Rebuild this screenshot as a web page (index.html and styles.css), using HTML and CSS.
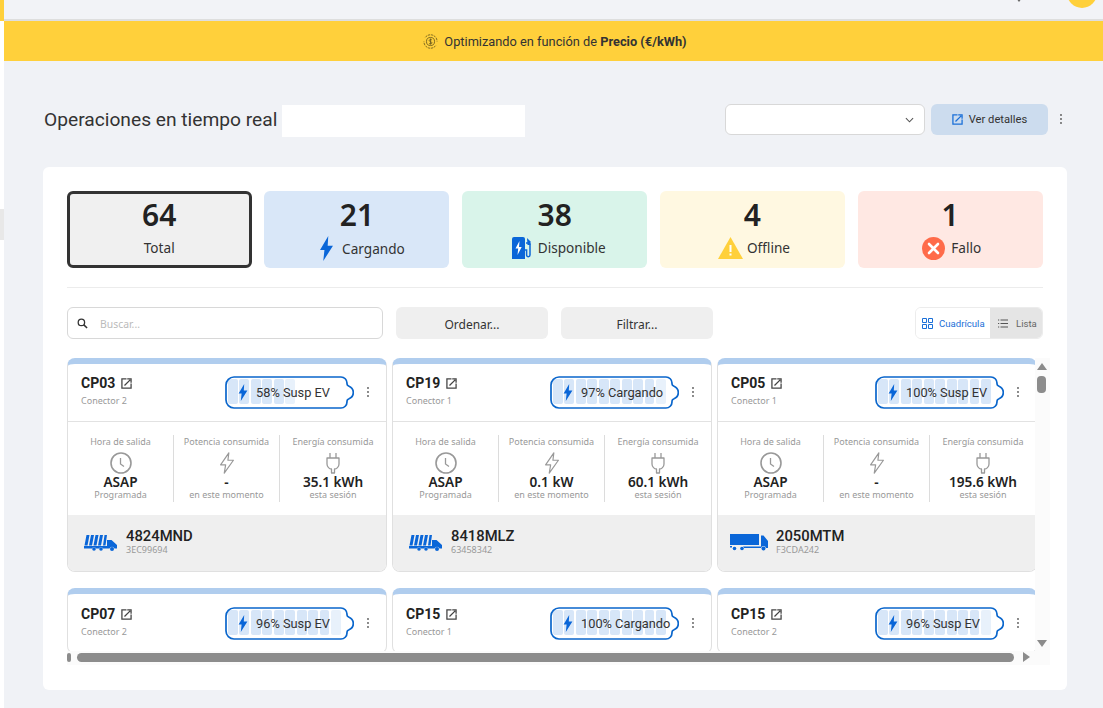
FILE: index.html
```html
<!DOCTYPE html>
<html lang="es">
<head>
<meta charset="utf-8">
<title>Operaciones en tiempo real</title>
<link rel="stylesheet" href="styles.css">
</head>
<body>
<svg class="defs" width="0" height="0" aria-hidden="true">
  <symbol id="ext" viewBox="0 0 12 12"><path d="M6 1H1v10h10V6" fill="none" stroke="currentColor" stroke-width="1.4"/><path d="M3.8 8.2 10 2M6.8 1h4.2v4.2" fill="none" stroke="currentColor" stroke-width="1.4"/></symbol>
  <symbol id="bolt" viewBox="0 0 10 17"><path d="M6.2 0 .6 9.6h3L2.8 17l6.6-10.4H5.8z" fill="currentColor"/></symbol>
  <symbol id="boltline" viewBox="0 0 18 24"><path d="M11 1 2 14h5.5L6 23l10-14h-6z" fill="none" stroke="currentColor" stroke-width="1.3" stroke-linejoin="round"/></symbol>
  <symbol id="clock" viewBox="0 0 22 22"><circle cx="11" cy="11" r="10" fill="none" stroke="currentColor" stroke-width="1.6"/><path d="M10.5 6v6l3.5 2.500" fill="none" stroke="currentColor" stroke-width="1.3"/></symbol>
  <symbol id="plug" viewBox="0 0 16 22"><path d="M5 1v5M11 1v5M2 6h12v6c0 3-2.500 5-4.500 5v4h-3v-4C4.500 17 2 15 2 12z" fill="none" stroke="currentColor" stroke-width="1.300" stroke-linejoin="round"/></symbol>
  <symbol id="batt" viewBox="0 0 129 33"><path d="M9 1H116a6 6 0 0 1 6 6v1q0 1.500 2 2.300c2.800 1.200 4.300 3.200 4.300 6.200s-1.500 5-4.300 6.200q-2 .8-2 2.300v1a6 6 0 0 1-6 6H9a8 8 0 0 1-8-8V9a8 8 0 0 1 8-8z" fill="none" stroke="#0a66cc" stroke-width="1.700"/></symbol>
  <symbol id="dots" viewBox="0 0 4 12"><circle cx="2" cy="2" r=".9" fill="currentColor"/><circle cx="2" cy="6" r=".9" fill="currentColor"/><circle cx="2" cy="10" r=".9" fill="currentColor"/></symbol>
  <symbol id="truck-a" viewBox="1 0 38 20"><g fill="#0a66d8"><path d="M7.500 2h3l-2 10.500h-3zM12 2h3l-2 10.500h-3zM16.500 2h3l-2 10.500h-3zM21 2h3l-2 10.500h-3zM25.500 2H28l-1.500 10.500h-2.500z"/><path d="M5 13h23v-6h4.500l5.500 5v3.500h-2.500a2.700 2.700 0 0 0-5 0H24a2.200 2.200 0 0 0-4 0h-3a2.200 2.200 0 0 0-4 0H5z"/><circle cx="15" cy="16" r="1.800"/><circle cx="22" cy="16" r="1.800"/><circle cx="33" cy="16" r="2"/></g></symbol>
  <symbol id="truck-b" viewBox="0 0 38 20"><g fill="#0a66d8"><path d="M0 1h29v11H0zM31 2.500h2.500L38 8v7h-2a2.600 2.600 0 0 0-5 0H14a2.500 2.500 0 0 0-1-1.500h18z"/><path d="M0 13h2v1.500H0z"/><circle cx="4.500" cy="15.500" r="1.800"/><circle cx="12" cy="15.500" r="1.800"/><circle cx="33.500" cy="15.500" r="2"/></g></symbol>
</svg>

<div class="page">
  <div class="rail">
    <div class="rail-top"></div>
    <div class="rail-item"></div>
  </div>
  <main class="main">
    <header class="topbar">
      <svg class="gear" viewBox="0 0 14 6" width="14" height="6"><path d="M1 0h12l-1.500 3H8.500L7 5 5.500 3h-3z" fill="#666"/></svg>
      <div class="avatar"></div>
    </header>
    <div class="banner">
      <svg class="opt-icon" viewBox="0 0 16 16" width="15" height="15"><g fill="none" stroke="#6b5a1e" stroke-width=".9"><path d="M2.500 3.500A7 7 0 0 1 15 8" stroke-dasharray="2.500 .8"/><path d="M13.500 12.500A7 7 0 0 1 1 8" stroke-dasharray="2.500 .8"/><circle cx="8" cy="8" r="4.300"/><path d="M9.600 6.500C9 5.700 6.600 5.600 6.600 7s3 1 3 2.400-2.500 1.400-3.200.5M8 4.800v6.400"/></g></svg>
      <span>Optimizando en función de <b>Precio (€/kWh)</b></span>
    </div>
    <div class="content">
      <div class="head-row">
        <h1 class="title">Operaciones en tiempo real</h1>
        <div class="blank"></div>
        <div class="select"><svg viewBox="0 0 10 6" width="9" height="6"><path d="M1 1l4 4 4-4" fill="none" stroke="#555" stroke-width="1.200"/></svg></div>
        <button class="details"><svg class="ext-blue" width="11" height="11"><use href="#ext"/></svg>Ver detalles</button>
        <svg class="head-dots" width="4" height="12"><use href="#dots"/></svg>
      </div>

      <section class="panel">
        <div class="stats">
          <div class="stat stat-total"><div class="num">64</div><div class="lab">Total</div></div>
          <div class="stat stat-blue"><div class="num">21</div><div class="lab lab-blue"><svg class="ic-bolt" width="15" height="25"><use href="#bolt"/></svg>Cargando</div></div>
          <div class="stat stat-green"><div class="num">38</div><div class="lab lab-green"><svg width="20" height="22" viewBox="0 0 20 22"><path d="M0 2a2 2 0 0 1 2-2h9a2 2 0 0 1 2 2v20H0z" fill="#0a66d8"/><path d="M7.500 4 3.500 11.500h2.700L5.500 18l4.200-8H7z" fill="#fff"/><path d="M14 6h2.500a1.500 1.500 0 0 1 1.500 1.500V18a1.700 1.700 0 0 1-3.400 0v-5H13" fill="none" stroke="#0a66d8" stroke-width="1.500"/><path d="M15 1l3.500 3.500v3.500h-3z" fill="#0a66d8"/></svg>Disponible</div></div>
          <div class="stat stat-yellow"><div class="num">4</div><div class="lab lab-yellow"><svg width="25" height="22" viewBox="0 0 25 22"><path d="M12.500 0 25 22H0z" fill="#ffd03b"/><path d="M11.500 8h2v7h-2zM11.500 16.500h2v2h-2z" fill="#fff"/></svg>Offline</div></div>
          <div class="stat stat-red"><div class="num">1</div><div class="lab lab-red"><svg width="23" height="23" viewBox="0 0 23 23"><circle cx="11.500" cy="11.500" r="11.500" fill="#ff6b4a"/><path d="M7 7l9 9M16 7l-9 9" stroke="#fff" stroke-width="2.600" stroke-linecap="round"/></svg>Fallo</div></div>
        </div>

        <div class="toolbar">
          <div class="search"><svg width="11" height="11" viewBox="0 0 12 12"><circle cx="4.800" cy="4.800" r="3.500" fill="none" stroke="#333" stroke-width="1.400"/><path d="M7.500 7.500 11 11" stroke="#333" stroke-width="1.600"/></svg><span class="placeholder">Buscar...</span></div>
          <button class="tool-btn">Ordenar...</button>
          <button class="tool-btn">Filtrar...</button>
          <div class="toggle">
            <div class="toggle-on"><svg width="11" height="11" viewBox="0 0 11 11"><path d="M.5.500h4v4h-4zM6.500.500h4v4h-4zM.5 6.500h4v4h-4zM6.500 6.500h4v4h-4z" fill="none" stroke="#1a6fd8"/></svg>Cuadrícula</div>
            <div class="toggle-off"><svg width="10" height="9" viewBox="0 0 10 9"><path d="M2.500 1H10M2.500 4.500H10M2.500 8H10M0 1h1.200M0 4.500h1.200M0 8h1.200" stroke="#555"/></svg>Lista</div>
          </div>
        </div>

        <div class="scroller">
          <div class="viewport">
            <div class="cards">

              <article class="card">
                <div class="card-head">
                  <div class="card-id"><div class="cp">CP03<svg class="ext" width="11" height="11"><use href="#ext"/></svg></div><div class="conn">Conector 2</div></div>
                  <div class="battery">
                    <div class="segs"><i></i><i></i><i></i><i></i><i></i><i class="part"></i></div>
                    <svg class="batt-line" width="129" height="33"><use href="#batt"/></svg>
                    <div class="batt-text"><svg width="10" height="17"><use href="#bolt"/></svg>58% Susp EV</div>
                  </div>
                  <svg class="dots" width="4" height="12"><use href="#dots"/></svg>
                </div>
                <div class="metrics">
                  <div class="metric"><div class="m-top">Hora de salida</div><svg class="m-ic" width="22" height="22"><use href="#clock"/></svg><div class="m-val">ASAP</div><div class="m-sub">Programada</div></div>
                  <div class="metric"><div class="m-top">Potencia consumida</div><svg class="m-ic" width="18" height="22"><use href="#boltline"/></svg><div class="m-val">-</div><div class="m-sub">en este momento</div></div>
                  <div class="metric"><div class="m-top">Energía consumida</div><svg class="m-ic" width="16" height="22"><use href="#plug"/></svg><div class="m-val">35.1 kWh</div><div class="m-sub">esta sesión</div></div>
                </div>
                <div class="card-foot"><svg width="38" height="20"><use href="#truck-a"/></svg><div><div class="plate">4824MND</div><div class="vin">3EC99694</div></div></div>
              </article>

              <article class="card">
                <div class="card-head">
                  <div class="card-id"><div class="cp">CP19<svg class="ext" width="11" height="11"><use href="#ext"/></svg></div><div class="conn">Conector 1</div></div>
                  <div class="battery">
                    <div class="segs"><i></i><i></i><i></i><i></i><i></i><i></i><i></i><i></i><i></i><i class="part"></i></div>
                    <svg class="batt-line" width="129" height="33"><use href="#batt"/></svg>
                    <div class="batt-text"><svg width="10" height="17"><use href="#bolt"/></svg>97% Cargando</div>
                  </div>
                  <svg class="dots" width="4" height="12"><use href="#dots"/></svg>
                </div>
                <div class="metrics">
                  <div class="metric"><div class="m-top">Hora de salida</div><svg class="m-ic" width="22" height="22"><use href="#clock"/></svg><div class="m-val">ASAP</div><div class="m-sub">Programada</div></div>
                  <div class="metric"><div class="m-top">Potencia consumida</div><svg class="m-ic" width="18" height="22"><use href="#boltline"/></svg><div class="m-val">0.1 kW</div><div class="m-sub">en este momento</div></div>
                  <div class="metric"><div class="m-top">Energía consumida</div><svg class="m-ic" width="16" height="22"><use href="#plug"/></svg><div class="m-val">60.1 kWh</div><div class="m-sub">esta sesión</div></div>
                </div>
                <div class="card-foot"><svg width="38" height="20"><use href="#truck-a"/></svg><div><div class="plate">8418MLZ</div><div class="vin">63458342</div></div></div>
              </article>

              <article class="card">
                <div class="card-head">
                  <div class="card-id"><div class="cp">CP05<svg class="ext" width="11" height="11"><use href="#ext"/></svg></div><div class="conn">Conector 1</div></div>
                  <div class="battery">
                    <div class="segs"><i></i><i></i><i></i><i></i><i></i><i></i><i></i><i></i><i></i><i></i></div>
                    <svg class="batt-line" width="129" height="33"><use href="#batt"/></svg>
                    <div class="batt-text"><svg width="10" height="17"><use href="#bolt"/></svg>100% Susp EV</div>
                  </div>
                  <svg class="dots" width="4" height="12"><use href="#dots"/></svg>
                </div>
                <div class="metrics">
                  <div class="metric"><div class="m-top">Hora de salida</div><svg class="m-ic" width="22" height="22"><use href="#clock"/></svg><div class="m-val">ASAP</div><div class="m-sub">Programada</div></div>
                  <div class="metric"><div class="m-top">Potencia consumida</div><svg class="m-ic" width="18" height="22"><use href="#boltline"/></svg><div class="m-val">-</div><div class="m-sub">en este momento</div></div>
                  <div class="metric"><div class="m-top">Energía consumida</div><svg class="m-ic" width="16" height="22"><use href="#plug"/></svg><div class="m-val">195.6 kWh</div><div class="m-sub">esta sesión</div></div>
                </div>
                <div class="card-foot"><svg width="38" height="20"><use href="#truck-b"/></svg><div><div class="plate">2050MTM</div><div class="vin">F3CDA242</div></div></div>
              </article>

              <article class="card card-low">
                <div class="card-head">
                  <div class="card-id"><div class="cp">CP07<svg class="ext" width="11" height="11"><use href="#ext"/></svg></div><div class="conn">Conector 2</div></div>
                  <div class="battery">
                    <div class="segs"><i></i><i></i><i></i><i></i><i></i><i></i><i></i><i></i><i></i><i class="part"></i></div>
                    <svg class="batt-line" width="129" height="33"><use href="#batt"/></svg>
                    <div class="batt-text"><svg width="10" height="17"><use href="#bolt"/></svg>96% Susp EV</div>
                  </div>
                  <svg class="dots" width="4" height="12"><use href="#dots"/></svg>
                </div>
              </article>

              <article class="card card-low">
                <div class="card-head">
                  <div class="card-id"><div class="cp">CP15<svg class="ext" width="11" height="11"><use href="#ext"/></svg></div><div class="conn">Conector 1</div></div>
                  <div class="battery">
                    <div class="segs"><i></i><i></i><i></i><i></i><i></i><i></i><i></i><i></i><i></i><i></i></div>
                    <svg class="batt-line" width="129" height="33"><use href="#batt"/></svg>
                    <div class="batt-text"><svg width="10" height="17"><use href="#bolt"/></svg>100% Cargando</div>
                  </div>
                  <svg class="dots" width="4" height="12"><use href="#dots"/></svg>
                </div>
              </article>

              <article class="card card-low">
                <div class="card-head">
                  <div class="card-id"><div class="cp">CP15<svg class="ext" width="11" height="11"><use href="#ext"/></svg></div><div class="conn">Conector 2</div></div>
                  <div class="battery">
                    <div class="segs"><i></i><i></i><i></i><i></i><i></i><i></i><i></i><i></i><i></i><i class="part"></i></div>
                    <svg class="batt-line" width="129" height="33"><use href="#batt"/></svg>
                    <div class="batt-text"><svg width="10" height="17"><use href="#bolt"/></svg>96% Susp EV</div>
                  </div>
                  <svg class="dots" width="4" height="12"><use href="#dots"/></svg>
                </div>
              </article>

            </div>
          </div>
          <div class="vbar"><span class="arr-up"></span><span class="v-thumb"></span><span class="arr-down"></span></div>
          <div class="hbar"><span class="h-stub"></span><span class="h-thumb"></span><span class="arr-right"></span></div>
        </div>
      </section>
    </div>
  </main>
</div>
</body>
</html>
```

FILE: styles.css
```css
* { box-sizing: border-box; }
html, body { margin: 0; height: 708px; overflow: hidden; }
body { background: #f0f2f6; font-family: "Noto Sans", sans-serif; color: #222; }
.defs { position: absolute; }
button { font: inherit; border: 0; padding: 0; color: inherit; }

.page { display: flex; height: 708px; }
.rail { width: 4px; flex: none; background: #fff; }
.rail-top { height: 21px; background: #ffd03b; }
.rail-item { height: 31px; margin-top: 188px; background: #e8e8e8; }
.main { flex: 1; min-width: 0; }

.topbar { height: 21px; background: #f2f3f7; border-bottom: 2px solid #dedede; overflow: hidden; display: flex; justify-content: flex-end; padding-right: 6px; }
.gear { margin: -3px 41px 0 0; }
.avatar { width: 30px; height: 30px; border-radius: 50%; background: #ffd03b; margin-top: -22px; }

.banner { height: 40px; background: #ffd03b; display: flex; align-items: center; justify-content: center; gap: 6px; font: 12.8px Roboto, sans-serif; color: #333; padding-left: 3px; }
.banner b { font-weight: 700; }

.content { padding: 43px 36px 0 40px; }
.head-row { display: flex; align-items: flex-start; height: 33px; }
.title { margin: 0; font: 400 19.2px/32px Roboto, sans-serif; color: #333; width: 238px; white-space: nowrap; }
.blank { width: 243px; height: 32px; background: #fff; margin: 1px 200px 0 0; }
.select { width: 200px; height: 31px; background: #fff; border: 1px solid #d8d8d8; border-radius: 6px; display: flex; align-items: center; justify-content: flex-end; padding-right: 10px; }
.details { width: 117px; height: 31px; margin-left: 6px; background: #ccdcee; border-radius: 6px; display: flex; align-items: center; justify-content: center; gap: 6px; font: 11.2px Roboto, sans-serif; color: #333; }
.ext-blue { color: #1a6fd8; }
.head-dots { margin: 9px 0 0 11px; color: #555; }

.panel { margin: 30px 0 0 -1px; background: #fff; border-radius: 6px; height: 523px; width: 1024px; padding: 24px 24px 0; }
.stats { display: grid; grid-template-columns: repeat(5, 185px); gap: 12.75px; height: 97px; padding-bottom: 20px; margin-left: -.3px; border-bottom: 1px solid #ececec; }
.stat { border-radius: 6px; text-align: center; height: 77px; }
.stat-total { background: #f0f0f0; border: 3px solid #333; }
.stat-blue { background: #d9e7f8; }
.stat-green { background: #d9f4ea; }
.stat-yellow { background: #fff8e1; }
.stat-red { background: #ffe8e3; }
.num { font-size: 30px; font-weight: 600; line-height: 40px; color: #222; padding-top: 4px; }
.stat-total .num { padding-top: 1px; }
.lab { font-size: 13.6px; line-height: 24px; display: flex; align-items: center; justify-content: center; gap: 6px; color: #333; margin-top: 1px; }
.lab-blue { padding-left: 10px; gap: 8px; }
.lab-green { padding-left: 8px; }
.lab-yellow { padding-left: 3px; gap: 4px; }
.lab-red { padding-left: 3px; }
.ic-bolt { color: #0a66d8; }

.toolbar { display: flex; align-items: center; margin-top: 19px; height: 32px; }
.search { width: 316px; height: 32px; border: 1px solid #d8d8d8; border-radius: 6px; display: flex; align-items: center; gap: 12px; padding-left: 9px; font-size: 10.4px; color: #bbb; }
.placeholder { padding-top: 1px; }
.tool-btn { width: 152px; height: 32px; background: #efefef; border-radius: 6px; font-size: 12px; color: #333; margin-left: 13px; padding-top: 2px; }
.toggle { margin-left: auto; width: 128px; height: 32px; display: flex; border-radius: 6px; overflow: hidden; border: 1px solid #ececec; font: 9.6px Roboto, sans-serif; }
.toggle-on { width: 74px; background: #fff; color: #1a6fd8; display: flex; align-items: center; gap: 6px; padding-left: 6px; }
.toggle-off { flex: 1; background: #e5e5e5; color: #666; display: flex; align-items: center; gap: 8px; padding-left: 8px; }

.scroller { display: grid; grid-template-columns: 968px 15px; grid-template-rows: 293px 14px; margin-top: 19px; background: #fbfbfb; width: 983px; }
.viewport { overflow: hidden; background: #fff; }
.cards { display: grid; grid-template-columns: repeat(3, 320px); column-gap: 5px; row-gap: 16px; }
.card { border: 1px solid #e0e0e0; border-top: 6px solid #b0cdee; border-radius: 8px; background: #fff; overflow: hidden; }

.card-head { height: 58px; display: flex; align-items: flex-start; padding: 12px 16px 0 13px; border-bottom: 1px solid #e2e2e2; }
.card-low .card-head { padding-top: 13px; height: 59px; }
.card-id { flex: 1; }
.cp { font: 700 14px/16px Roboto, sans-serif; color: #222; display: flex; align-items: center; gap: 6px; margin-top: -1px; }
.ext { color: #444; }
.conn { font: 9px/12px "Noto Sans", sans-serif; color: #999; margin-top: 4px; }
.battery { position: relative; width: 129px; height: 33px; }
.batt-line { position: absolute; inset: 0; }
.segs { display: flex; gap: 1.9px; padding: 3px 0 0 3px; height: 28px; }
.segs i { width: 9.6px; height: 25px; background: #d7e6f8; border-radius: 2px; display: block; }
.segs i.part { background: #e8f1fb; }
.batt-text { position: absolute; inset: 0; display: flex; align-items: center; gap: 8px; padding: 0 0 1px 13px; font: 12.8px Roboto, sans-serif; color: #333; white-space: nowrap; }
.batt-text svg { color: #0a66d8; }
.dots { margin: 10px 0 0 12px; color: #555; }

.metrics { height: 93px; display: grid; grid-template-columns: repeat(3, 106px); padding-top: 13px; }
.metric { height: 67px; text-align: center; border-right: 1px solid #dcdcdc; display: flex; flex-direction: column; align-items: center; }
.metric:last-child { border-right: 0; }
.m-top, .m-sub { font-size: 9px; line-height: 14px; color: #999; white-space: nowrap; }
.m-ic { color: #999; margin-top: 3px; }
.m-val { font-size: 13.6px; font-weight: 600; line-height: 14px; color: #222; margin-top: 1px; white-space: nowrap; }
.m-sub { line-height: 12px; margin-top: 0; }

.card-foot { height: 56px; background: #efefef; display: flex; align-items: center; gap: 8px; padding: 0 0 3px 12px; }
.card-foot svg { margin-top: 2px; }
.plate { font: 500 14.8px/16px Roboto, sans-serif; color: #222; }
.vin { font: 9px/12px "Noto Sans", sans-serif; color: #999; }

.vbar { display: flex; flex-direction: column; align-items: center; padding: 5px 2px 4px 0; background: #fbfbfb; }
.arr-up { border: 5px solid transparent; border-top: 0; border-bottom: 7px solid #8c8c8c; }
.arr-down { border: 5px solid transparent; border-bottom: 0; border-top: 7px solid #8c8c8c; margin-top: auto; }
.v-thumb { width: 9px; height: 17px; background: #8c8c8c; border-radius: 4px; margin-top: 6px; }
.hbar { grid-column: 1 / -1; display: flex; align-items: center; height: 14px; padding-bottom: 2px; background: #fbfbfb; }
.h-stub { width: 4px; height: 9px; background: #8c8c8c; border-radius: 2px; }
.h-thumb { width: 937px; height: 9px; background: #8c8c8c; border-radius: 5px; margin-left: 6px; }
.arr-right { border: 5px solid transparent; border-right: 0; border-left: 7px solid #8c8c8c; margin-left: 9px; }
```
